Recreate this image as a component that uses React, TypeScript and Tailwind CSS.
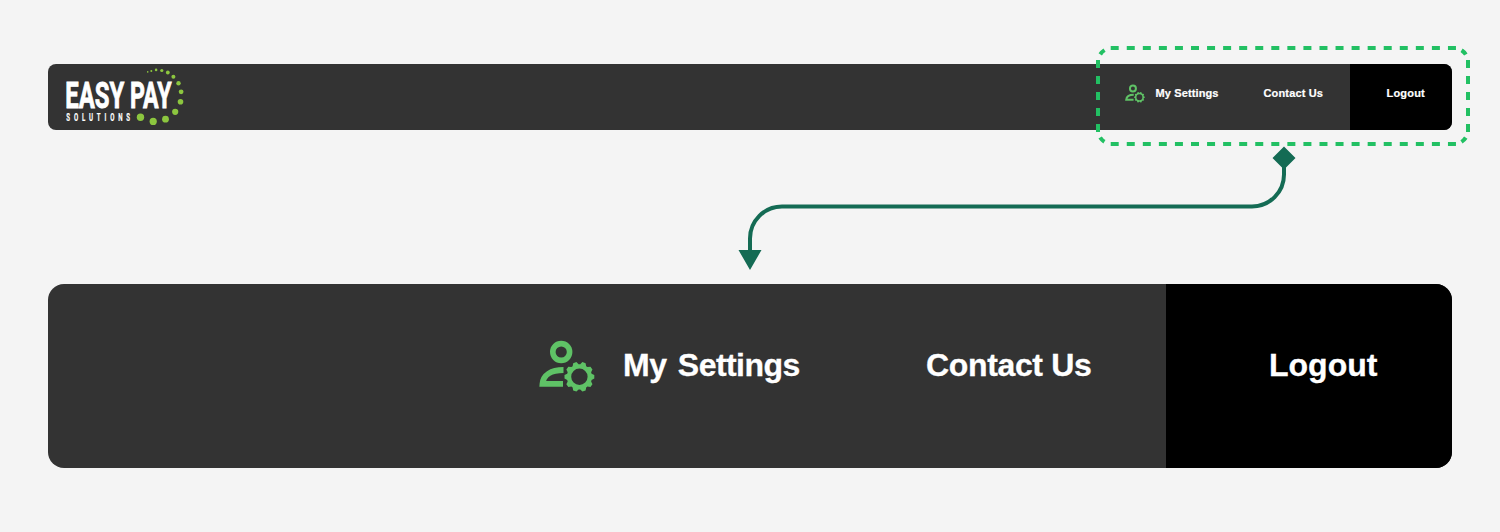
const dots = [
  [147.7, 71.9, 0.8],
  [151.3, 70.9, 1],
  [156.1, 69.9, 1.3],
  [161.8, 70.5, 1.6],
  [167.8, 72.5, 1.9],
  [173.4, 76.8, 2],
  [178.5, 83.2, 2.2],
  [181.1, 91.8, 2.4],
  [180.5, 101.8, 2.8],
  [175.2, 111.8, 3.1],
  [165.5, 119.2, 3.4],
  [153.2, 121.4, 3.6],
  [140.5, 117.3, 3.7],
];

function Logo() {
  return (
    <svg className="block h-[66px] w-[150px] shrink-0" viewBox="48 64 150 66" aria-label="Easy Pay Solutions">
      <g fill="#fff" fontFamily="Roboto, 'Liberation Sans', sans-serif" fontWeight="700">
        <g fontSize="37.6" stroke="#fff" strokeWidth="0.9">
          <text x="65.2" y="107.8" textLength="59" lengthAdjust="spacingAndGlyphs">EASY</text>
          <text x="130" y="107.8" textLength="41.500" lengthAdjust="spacingAndGlyphs">PAY</text>
        </g>
        <text
          transform="translate(66.300 121.200) scale(0.58 1)"
          fontSize="10.5"
          stroke="#fff"
          strokeWidth="0.2"
          textLength="110"
          lengthAdjust="spacing"
        >
          SOLUTIONS
        </text>
      </g>
      <g fill="#8cc63f">
        {dots.map(([x, y, r]) => (
          <circle key={x} cx={x} cy={y} r={r} />
        ))}
      </g>
    </svg>
  );
}

const TEETH = 10;
const gearOutline = Array.from({ length: TEETH }, (_, i) => {
  const step = (2 * Math.PI) / TEETH;
  return [
    [-0.4, 12.6],
    [-0.18, 15],
    [0.18, 15],
    [0.4, 12.6],
  ]
    .map(([offset, r]) => {
      const angle = (i + offset) * step;
      return `${(40.4 + r * Math.cos(angle)).toFixed(2)},${(36.8 + r * Math.sin(angle)).toFixed(2)}`;
    })
    .join(" ");
}).join(" ");

function UserGear({ className }: { className: string }) {
  return (
    <svg className={className} viewBox="0 0 56 54" fill="none" stroke="#5fc266">
      <circle cx="22.2" cy="12" r="8.4" strokeWidth="5.6" />
      <path d="M24.500 30C12 30 4.200 35 3.500 43.800H24" strokeWidth="5.8" />
      <path
        d={`M${gearOutline}ZM48.600 36.800A8.200 8.200 0 1 0 32.200 36.800A8.200 8.200 0 1 0 48.600 36.800Z`}
        fill="#5fc266"
        fillRule="evenodd"
        stroke="none"
      />
    </svg>
  );
}

function Highlight() {
  return (
    <svg
      className="absolute left-[1096px] top-[46px] h-[100px] w-[374px]"
      viewBox="1096 46 374 100"
      fill="none"
      stroke="#22c063"
      strokeWidth="4"
    >
      <path d="M1110.700 48H1456M1110.700 144H1456" strokeDasharray="8 8.060" />
      <path d="M1098 60V132M1468 60V132" strokeDasharray="8 8" />
      <path
        d="M1098 62A14 14 0 0 1 1112 48M1454 48A14 14 0 0 1 1468 62M1468 130A14 14 0 0 1 1454 144M1112 144A14 14 0 0 1 1098 130"
        strokeDasharray="0 8 6 40"
      />
    </svg>
  );
}

function Connector() {
  return (
    <svg className="absolute left-[738px] top-[146px] h-[125px] w-[558px]" viewBox="738 146 558 125">
      <path
        d="M1284 158V174.500A32 32 0 0 1 1252 206.500H782A32 32 0 0 0 750 238.500V252"
        fill="none"
        stroke="#146b54"
        strokeWidth="4"
      />
      <path d="M1284 146.500L1295.500 158L1284 169.500L1272.500 158ZM738.500 250H761.500L750 270Z" fill="#146b54" />
    </svg>
  );
}

export default function App() {
  return (
    <main className="relative h-[532px] w-[1500px] overflow-hidden bg-[#f4f4f4] px-12 pt-16 font-['Liberation_Sans',Arial,sans-serif] font-bold text-white">
      <header className="flex h-[66px] overflow-hidden rounded-lg bg-[#333333]">
        <Logo />
        <nav className="ml-auto flex text-[11px] leading-[14px] [-webkit-text-stroke:0.2px_white]">
          <div className="flex w-[109px] pt-[22px]">
            <UserGear className="-mt-[2px] mr-[10.500px] h-[19.500px] w-[20px] shrink-0" />
            <span className="whitespace-nowrap tracking-[0.12px]">My Settings</span>
          </div>
          <div className="w-[116px] pl-[29.500px] pt-[22px]">
            <span className="whitespace-nowrap tracking-[0.15px]">Contact Us</span>
          </div>
          <div className="w-[102px] bg-black pl-[36.500px] pt-[22px] tracking-[0.2px]">Logout</div>
        </nav>
      </header>

      <section className="mt-[154px] flex h-[184px] overflow-hidden rounded-2xl bg-[#333333] text-[32px] leading-9 [-webkit-text-stroke:0.3px_white]">
        <div className="flex flex-1 pl-[491px] pt-[63px]">
          <UserGear className="-mt-[7px] mr-[28px] h-[54px] w-[56px] shrink-0" />
          <span className="w-[303px] shrink-0 whitespace-nowrap tracking-[-0.5px] [word-spacing:4px]">
            My <span className="-ml-px tracking-[-0.550px]">Settings</span>
          </span>
          <span className="whitespace-nowrap tracking-[-0.35px]">Contact Us</span>
        </div>
        <div className="w-[286px] bg-black pl-[103px] pt-[63px]">Logout</div>
      </section>

      <Highlight />
      <Connector />
    </main>
  );
}
